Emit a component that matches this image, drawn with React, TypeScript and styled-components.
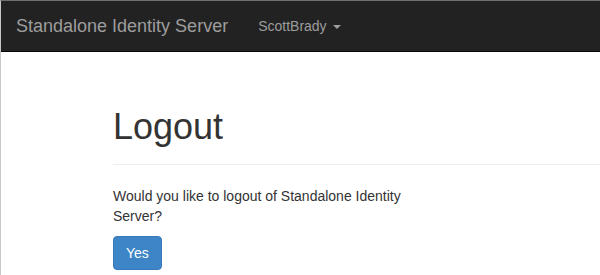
import React from "react";
import styled, { createGlobalStyle } from "styled-components";

const Global = createGlobalStyle`
  html, body { margin: 0; padding: 0; background: #fff; }
  body {
    font-family: "Liberation Sans", Arial, Helvetica, sans-serif;
    font-size: 14px;
    line-height: 20px;
    color: #333;
  }
`;

const Frame = styled.div`
  width: 600px;
  height: 275px;
  box-sizing: border-box;
  border-top: 1px solid #6f6f6f;
  border-left: 1px solid #c8c8c8;
  overflow: hidden;
`;

const Navbar = styled.nav`
  display: flex;
  align-items: flex-start;
  height: 50px;
  background: #222;
  border-bottom: 1px solid #080808;
`;

const Brand = styled.a`
  padding: 15px;
  font-size: 18px;
  line-height: 20px;
  color: #9d9d9d;
  text-decoration: none;
  white-space: nowrap;
`;

const NavLink = styled.a`
  display: flex;
  align-items: center;
  padding: 15px;
  font-size: 14px;
  line-height: 20px;
  color: #9d9d9d;
  text-decoration: none;
  white-space: nowrap;
`;

const Caret = styled.span`
  display: inline-block;
  width: 0;
  height: 0;
  margin-left: 6px;
  margin-top: 1px;
  border-top: 4px solid #9d9d9d;
  border-left: 4px solid transparent;
  border-right: 4px solid transparent;
`;

const Main = styled.main`
  padding: 55px 0 0 112px;
`;

const PageHeader = styled.div`
  padding-bottom: 9px;
  border-bottom: 1px solid #eee;
  margin-bottom: 21px;
`;

const Title = styled.h1`
  margin: 0 0 8px;
  font-size: 36px;
  line-height: 39.6px;
  font-weight: 500;
  color: #333;
`;

const Text = styled.p`
  margin: 0 0 10px;
  width: 330px;
`;

const Button = styled.button`
  font-family: inherit;
  font-size: 14px;
  line-height: 20px;
  padding: 6px 12px;
  color: #fff;
  background: #3d85c6;
  border: 1px solid #3679b8;
  border-radius: 4px;
  cursor: pointer;
`;

export default function App() {
  return (
    <>
      <Global />
      <Frame>
        <Navbar>
          <Brand href="#">Standalone Identity Server</Brand>
          <NavLink href="#">
            ScottBrady
            <Caret />
          </NavLink>
        </Navbar>
        <Main>
          <PageHeader>
            <Title>Logout</Title>
          </PageHeader>
          <Text>Would you like to logout of Standalone Identity Server?</Text>
          <Button>Yes</Button>
        </Main>
      </Frame>
    </>
  );
}
